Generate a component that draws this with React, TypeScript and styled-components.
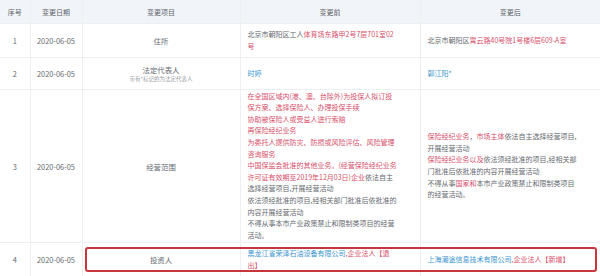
import styled, { createGlobalStyle } from "styled-components";

const GlobalStyle = createGlobalStyle`
  html, body {
    margin: 0;
    padding: 0;
    background: #ffffff;
  }
  body {
    font-family: "Noto Sans CJK SC", "Noto Sans", sans-serif;
  }
`;

type Seg = { t: string; c?: "red" | "blue" | "grey" };
type Lines = Seg[][];

interface ChangeRow {
  seq: string;
  date: string;
  item: string;
  note?: string;
  before: Lines;
  after: Lines;
  height: number;
}

const rows: ChangeRow[] = [
  {
    seq: "1",
    date: "2020-06-05",
    item: "住所",
    height: 34,
    before: [
      [{ t: "北京市朝阳区工人" }, { t: "体育场东路甲2号7层701室02", c: "red" }],
      [{ t: "号", c: "red" }],
    ],
    after: [[{ t: "北京市朝阳区" }, { t: "霄云路40号院1号楼6层609-A室", c: "red" }]],
  },
  {
    seq: "2",
    date: "2020-06-05",
    item: "法定代表人",
    note: "带有*标记的为法定代表人",
    height: 32,
    before: [[{ t: "时婷", c: "blue" }]],
    after: [[{ t: "郭江阳*", c: "blue" }]],
  },
  {
    seq: "3",
    date: "2020-06-05",
    item: "经营范围",
    height: 153,
    before: [
      [{ t: "在全国区域内(港、澳、台除外)为投保人拟订投", c: "red" }],
      [{ t: "保方案、选择保险人、办理投保手续", c: "red" }],
      [{ t: "协助被保险人或受益人进行索赔", c: "red" }],
      [{ t: "再保险经纪业务", c: "red" }],
      [{ t: "为委托人提供防灾、防损或风险评估、风险管理", c: "red" }],
      [{ t: "咨询服务", c: "red" }],
      [{ t: "中国保监会批准的其他业务。(经营保险经纪业务", c: "red" }],
      [{ t: "许可证有效期至2019年12月03日)企业", c: "red" }, { t: "依法自主" }],
      [{ t: "选择经营项目,开展经营活动" }],
      [{ t: "依法须经批准的项目,经相关部门批准后依批准的" }],
      [{ t: "内容开展经营活动" }],
      [{ t: "不得从事本市产业政策禁止和限制类项目的经营" }],
      [{ t: "活动。" }],
    ],
    after: [
      [
        { t: "保险经纪业务", c: "red" },
        { t: "，" },
        { t: "市场主体", c: "red" },
        { t: "依法自主选择经营项目," },
      ],
      [{ t: "开展经营活动" }],
      [{ t: "保险经纪业务以及", c: "red" }, { t: "依法须经批准的项目,经相关部" }],
      [{ t: "门批准后依批准的内容开展经营活动" }],
      [{ t: "不得从事" }, { t: "国家和", c: "red" }, { t: "本市产业政策禁止和限制类项目" }],
      [{ t: "的经营活动。" }],
    ],
  },
  {
    seq: "4",
    date: "2020-06-05",
    item: "投资人",
    height: 34,
    before: [
      [
        { t: "黑龙江省荣泽石油设备有限公司", c: "blue" },
        { t: ",企业法人", c: "red" },
        { t: "【退", c: "red" },
      ],
      [{ t: "出】", c: "red" }],
    ],
    after: [
      [
        { t: "上海潮途信息技术有限公司", c: "blue" },
        { t: ",企业法人", c: "red" },
        { t: "【新增】", c: "red" },
      ],
    ],
  },
];

function Text({ lines }: { lines: Lines }) {
  return (
    <TextBlock>
      {lines.map((line, i) => (
        <Line key={i}>
          {line.map((s, j) => (
            <Span key={j} tone={s.c ?? "grey"}>
              {s.t}
            </Span>
          ))}
        </Line>
      ))}
    </TextBlock>
  );
}

export default function App() {
  return (
    <>
      <GlobalStyle />
      <Wrapper>
        <Table>
          <colgroup>
            <col style={{ width: 30 }} />
            <col style={{ width: 52 }} />
            <col style={{ width: 158 }} />
            <col style={{ width: 180 }} />
            <col style={{ width: 180 }} />
          </colgroup>
          <thead>
            <tr>
              <Th>序号</Th>
              <Th>变更日期</Th>
              <Th>变更项目</Th>
              <Th>变更前</Th>
              <Th>变更后</Th>
            </tr>
          </thead>
          <tbody>
            {rows.map((r) => (
              <tr key={r.seq} style={{ height: r.height }}>
                <Center>{r.seq}</Center>
                <Center>{r.date}</Center>
                <Center>
                  <div>{r.item}</div>
                  {r.note && <Note>{r.note}</Note>}
                </Center>
                <Td>
                  <Text lines={r.before} />
                </Td>
                <Td>
                  <Text lines={r.after} />
                </Td>
              </tr>
            ))}
          </tbody>
        </Table>
        <Highlight />
      </Wrapper>
    </>
  );
}

const Wrapper = styled.div`
  position: relative;
  width: 600px;
  height: 276px;
  overflow: hidden;
  background: #ffffff;
`;

const Table = styled.table`
  width: 600px;
  border-collapse: collapse;
  table-layout: fixed;
  font-size: 7px;
  color: #666a70;

  td,
  th {
    border: 1px solid #edf0f3;
  }
  tr:first-child th {
    border-top: none;
  }
  td:first-child,
  th:first-child {
    border-left: none;
  }
  td:last-child,
  th:last-child {
    border-right: none;
  }
`;

const Th = styled.th`
  height: 23px;
  padding: 0;
  background: #f1f5f9;
  font-weight: 400;
  font-size: 7px;
  color: #5f646b;
  text-align: center;
`;

const Center = styled.td`
  padding: 0;
  text-align: center;
  vertical-align: middle;
  font-size: 7.4px;
  line-height: 11px;
`;

const Note = styled.div`
  font-size: 5.5px;
  line-height: 9px;
  color: #9a9ea4;
`;

const Td = styled.td`
  padding: 0 6px 0 7px;
  vertical-align: middle;
`;

const TextBlock = styled.div`
  display: flex;
  flex-direction: column;
`;

const Line = styled.div`
  white-space: nowrap;
  font-size: 7px;
  line-height: 11.6px;
`;

const toneColor = {
  red: "#d64f6a",
  blue: "#3c95cf",
  grey: "#666a70",
};

const Span = styled.span<{ tone: "red" | "blue" | "grey" }>`
  color: ${(p) => toneColor[p.tone]};
`;

const Highlight = styled.div`
  position: absolute;
  left: 85px;
  top: 247px;
  width: 512px;
  height: 25px;
  box-sizing: border-box;
  border: 2px solid #c8353c;
  border-radius: 3px;
  pointer-events: none;
`;
